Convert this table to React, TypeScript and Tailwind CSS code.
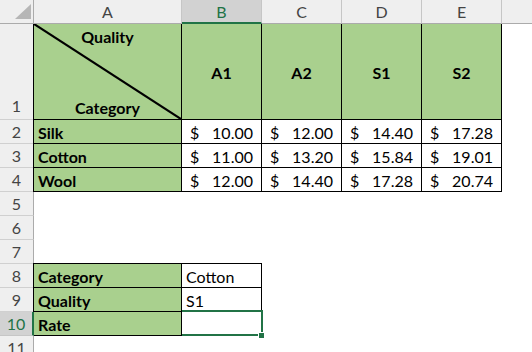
import React from "react";

const rates: [string, string[]][] = [
  ["Silk", ["10.00", "12.00", "14.40", "17.28"]],
  ["Cotton", ["11.00", "13.20", "15.84", "19.01"]],
  ["Wool", ["12.00", "14.40", "17.28", "20.74"]],
];

const lookup: [string, string][] = [
  ["Category", "Cotton"],
  ["Quality", "S1"],
  ["Rate", ""],
];

function RowHead({ n, active = false, tall = false }: { n: number; active?: boolean; tall?: boolean }) {
  return (
    <div
      className={
        active
          ? "relative z-20 flex items-end justify-center pb-[3px] leading-none bg-[#d2d2d2] border-b border-b-[#c6c6c6] border-r-2 border-r-[#217346] text-[#217346]"
          : "flex items-end justify-center pb-[3px] leading-none bg-[#efefef] border-b border-b-[#d0d0d0] border-r border-r-[#ababab] text-[#444]"
      }
    >
      <span className={tall ? "pb-[2px]" : ""}>{n}</span>
    </div>
  );
}

function ColHead({ label, active = false, last = false }: { label: string; active?: boolean; last?: boolean }) {
  if (active) {
    return (
      <div className="flex items-center justify-center pt-px leading-none bg-[#d2d2d2] border-b-2 border-b-[#217346] border-r border-r-[#c6c6c6] text-[#217346]">
        {label}
      </div>
    );
  }
  return (
    <div
      className={
        last
          ? "flex items-center justify-center pt-px leading-none bg-[#efefef] border-b border-b-[#ababab]"
          : "flex items-center justify-center pt-px leading-none bg-[#efefef] border-b border-b-[#ababab] border-r border-r-[#c6c6c6] text-[#444]"
      }
    >
      {label}
    </div>
  );
}

export default function App() {
  return (
    <div className="w-[532px] h-[352px] overflow-hidden bg-white font-['Lato',sans-serif] text-[16px] text-black">
      <div className="grid grid-cols-[34px_148px_80px_80px_80px_80px_1fr] grid-rows-[24px_96px_repeat(10,24px)]">
        {/* column headers */}
        <div className="relative bg-[#efefef] border-r border-b border-[#ababab]">
          <svg className="absolute inset-0" width="33" height="23" viewBox="0 0 33 23">
            <polygon points="15,19 31,19 31,4" fill="#b6b6b6" />
          </svg>
        </div>
        <ColHead label="A" />
        <ColHead label="B" active />
        <ColHead label="C" />
        <ColHead label="D" />
        <ColHead label="E" />
        <ColHead label="" last />

        {/* row 1: corner label and quality grades */}
        <RowHead n={1} tall />
        <div className="relative z-10 -ml-px flex flex-col items-center justify-between pt-[5px] pb-[3px] leading-none font-bold bg-[#a9d08e] border-l border-r border-b border-black">
          <svg className="absolute inset-0 h-full w-full" viewBox="0 0 100 100" preserveAspectRatio="none">
            <line x1="0" y1="0" x2="100" y2="100" stroke="#000" strokeWidth="2.2" vectorEffect="non-scaling-stroke" />
          </svg>
          <span className="relative">Quality</span>
          <span className="relative">Category</span>
        </div>
        {["A1", "A2", "S1", "S2"].map((q) => (
          <div
            key={q}
            className="flex items-center justify-center pt-[3px] leading-none font-bold bg-[#a9d08e] border-r border-b border-black"
          >
            {q}
          </div>
        ))}
        <div />

        {/* rows 2-4: rate table */}
        {rates.map(([name, vals], i) => (
          <React.Fragment key={name}>
            <RowHead n={i + 2} />
            <div className="relative z-10 -ml-px flex items-end pl-[4px] pb-[2px] leading-none font-bold bg-[#a9d08e] border-l border-r border-b border-black">
              {name}
            </div>
            {vals.map((v, j) => (
              <div
                key={j}
                className="flex items-end justify-between pl-[8px] pr-[8px] pb-[2px] leading-none border-r border-b border-black"
              >
                <span>$</span>
                <span>{v}</span>
              </div>
            ))}
            <div />
          </React.Fragment>
        ))}

        {/* rows 5-7: empty */}
        {[5, 6, 7].map((n) => (
          <React.Fragment key={n}>
            <RowHead n={n} />
            <div className="col-span-6" />
          </React.Fragment>
        ))}

        {/* rows 8-10: lookup block */}
        {lookup.map(([label, value], i) => (
          <React.Fragment key={label}>
            <RowHead n={i + 8} active={i === 2} />
            <div
              className={
                i === 0
                  ? "relative z-10 -ml-px -mt-px flex items-end pl-[4px] pb-[2px] leading-none font-bold bg-[#a9d08e] border border-black"
                  : "relative z-10 -ml-px flex items-end pl-[4px] pb-[2px] leading-none font-bold bg-[#a9d08e] border-l border-r border-b border-black"
              }
            >
              {label}
            </div>
            <div
              className={
                i === 0
                  ? "relative -mt-px flex items-end pl-[4px] pb-[2px] leading-none border-t border-r border-b border-black"
                  : "relative flex items-end pl-[4px] pb-[2px] leading-none border-r border-b border-black"
              }
            >
              {value}
              {i === 2 && (
                <>
                  <div className="absolute -left-[2px] -top-[2px] w-[83px] h-[26px] border-2 border-[#217346]" />
                  <div className="absolute left-[76px] top-[20px] w-[7px] h-[7px] bg-[#217346] border border-white" />
                </>
              )}
            </div>
            <div className="col-span-4" />
          </React.Fragment>
        ))}

        {/* row 11 */}
        <RowHead n={11} />
        <div className="col-span-6" />
      </div>
    </div>
  );
}
